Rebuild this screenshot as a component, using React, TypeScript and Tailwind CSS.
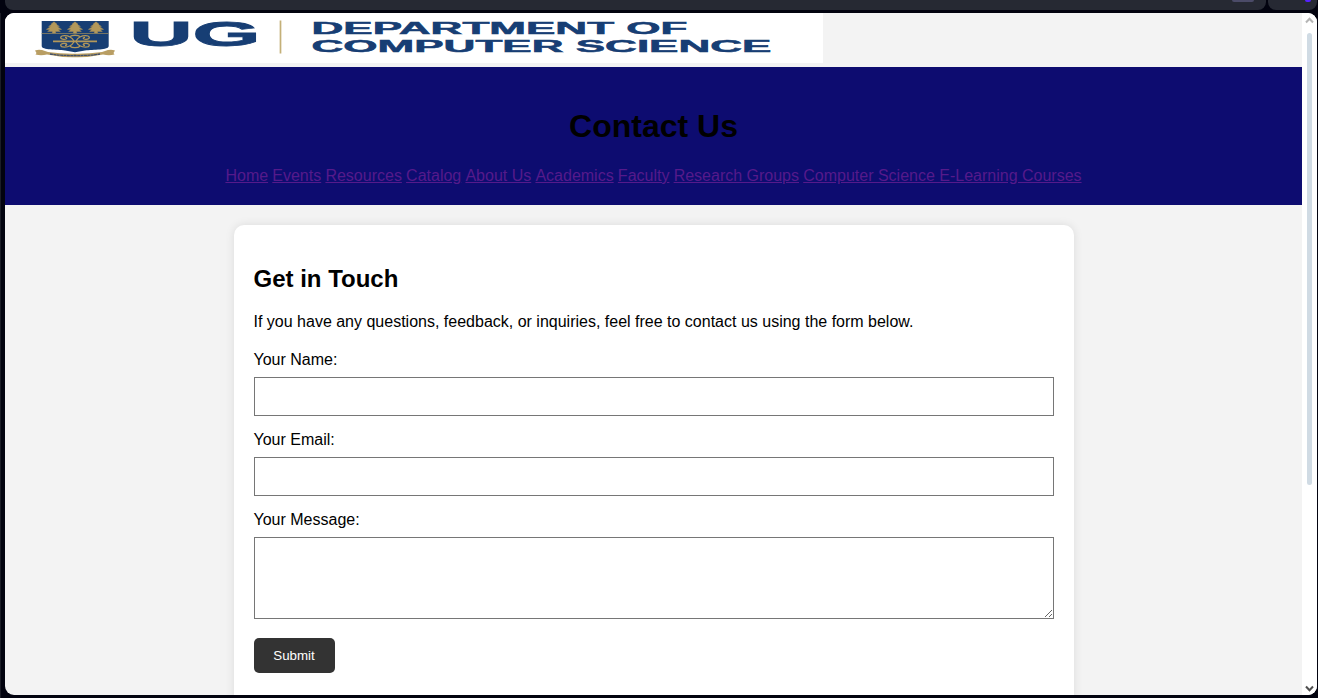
import React from "react";

const links = [
  "Home",
  "Events",
  "Resources",
  "Catalog",
  "About Us",
  "Academics",
  "Faculty",
  "Research Groups",
  "Computer Science E-Learning Courses",
];

function Tree({ x }: { x: number }) {
  return (
    <g transform={`translate(${x} 8.8)`} fill="#b3985a" stroke="#b3985a" strokeWidth=".4">
      <path d="M0 0 3 2.4H2L5.4 4.6H3.2L7.6 7.6H4L6.4 9.8H1.6V11.2H-1.6V9.8H-6.4L-4 7.6H-7.6L-3.2 4.6H-5.4L-2 2.4H-3Z" />
    </g>
  );
}

function Logo() {
  return (
    <svg className="block h-[50px] w-[818px] bg-white" viewBox="0 0 818 50">
      <path d="M36.7 8H103.7V33C103.7 37.3 88 36.5 80 37.4L70 39.3 60 37.4C52 36.5 36.7 37.3 36.7 33Z" fill="#173e74" />
      <path d="M36.7 20.5H103.7" stroke="#8d8462" strokeWidth=".8" />
      <Tree x={49} />
      <Tree x={70} />
      <Tree x={91} />
      <g fill="none" stroke="#b3985a" strokeWidth="1.3">
        <path d="M48 28.4H92" strokeWidth="1.6" />
        <path d="M69 28C67 24.5 64 22.6 59.5 22.6 54.5 22.6 54.5 26.4 59 26.4 62.5 26.4 62.5 24.4 60 24.4" />
        <path d="M71 28C73 24.5 76 22.6 80.5 22.6 85.5 22.6 85.5 26.4 81 26.4 77.5 26.4 77.5 24.4 80 24.4" />
        <path d="M69 28.8C67 32.3 64 34.2 59.5 34.2 54.5 34.2 54.5 30.4 59 30.4 62.5 30.4 62.5 32.4 60 32.4" />
        <path d="M71 28.8C73 32.3 76 34.2 80.5 34.2 85.5 34.2 85.5 30.4 81 30.4 77.5 30.4 77.5 32.4 80 32.4" />
        <path d="M65 23.6C67 21.8 73 21.8 75 23.6M65 33.2C67 35 73 35 75 33.2" />
      </g>
      <path d="M30 37.4Q35 36 40 38L43 39Q56 41 70 40.8Q84 41 97 39L100 38Q105 36 110 37.4L108.5 40 109.5 41.5Q104 43 98 41.5Q84 44.5 70 44.2Q56 44.5 42 41.5Q36 43 30.5 41.5L31.5 40Z" fill="#b99e63" />
      <path d="M45 41Q57 42.8 70 42.5Q83 42.8 95 41" fill="none" stroke="#42506a" strokeWidth="1.3" strokeDasharray="3 .4" />
      <g fill="#173e74" stroke="#173e74" fontFamily="'Liberation Sans', Arial, sans-serif" fontWeight="700">
        <text x="124.5" y="33.2" fontSize="34.5" strokeWidth=".8" textLength="131" lengthAdjust="spacingAndGlyphs">UG</text>
        <text x="306.5" y="20.8" fontSize="16.8" strokeWidth=".5" textLength="376" lengthAdjust="spacingAndGlyphs">DEPARTMENT OF</text>
        <text x="306.5" y="38.5" fontSize="16.8" strokeWidth=".5" textLength="460" lengthAdjust="spacingAndGlyphs">COMPUTER SCIENCE</text>
      </g>
      <path d="M275.5 7.5V40.5" stroke="#c4b078" strokeWidth="1.7" />
    </svg>
  );
}

function Scrollbar() {
  return (
    <div className="flex w-[15px] shrink-0 flex-col items-center bg-white pt-[4px] pb-[3px]">
      <svg width="9" height="7" viewBox="0 0 9 7" fill="none" stroke="#b5b5b5" strokeWidth="2">
        <path d="M1 5.5 4.5 1.7 8 5.5" />
      </svg>
      <div className="mt-[9px] h-[452px] w-[5px] rounded-full bg-[#d0dbe4]" />
      <svg className="mt-auto" width="9" height="7" viewBox="0 0 9 7" fill="none" stroke="#505050" strokeWidth="2">
        <path d="M1 1.5 4.5 5.3 8 1.5" />
      </svg>
    </div>
  );
}

export default function App() {
  return (
    <div className="flex h-[698px] w-[1318px] flex-col overflow-hidden bg-[#02030f] font-['Liberation_Sans',Arial,sans-serif] text-base leading-[18px] text-black">
      <div className="flex h-[10px] shrink-0 gap-[2px] pr-px pl-[5px]">
        <div className="flex flex-1 justify-end rounded-b-lg bg-[#262933] pr-[12px]">
          <div className="h-[2px] w-[22px] rounded-b-full bg-[#4b4b68]" />
        </div>
        <div className="flex w-[49px] justify-end rounded-b-lg bg-[#262933] pr-[6px]">
          <div className="h-[2px] w-[6px] rounded-b-full bg-[#5522ff]" />
        </div>
      </div>
      <div className="mt-[3px] flex h-[685px] border-l border-[#1b1d27] pr-px pb-[3px] pl-[4px]">
        <div className="flex flex-1 overflow-hidden rounded-[9px] bg-[#f3f3f3]">
          <div className="w-[1297px] overflow-hidden">
            <Logo />
            <header className="mt-[4px] h-[138px] bg-[#0d0c70] pt-[41px] text-center">
              <h1 className="text-[32px] leading-[37px] font-bold">Contact Us</h1>
              <nav className="mt-[22px] flex justify-center gap-[4.2px] whitespace-nowrap">
                {links.map((label) => (
                  <a key={label} href="#" className="text-[#551a8b] underline">
                    {label}
                  </a>
                ))}
              </nav>
            </header>
            <main className="mx-auto mt-[20px] h-[520px] w-[840px] rounded-[10px] bg-white px-[20px] pt-[40px] shadow-[0_0_10px_rgba(0,0,0,0.1)]">
              <h2 className="text-2xl leading-[28px] font-bold">Get in Touch</h2>
              <p className="mt-[20px]">
                If you have any questions, feedback, or inquiries, feel free to contact us using the form below.
              </p>
              <form className="flex flex-col pt-[20px]">
                <label htmlFor="name">Your Name:</label>
                <input id="name" className="mt-[8px] h-[39px] border border-[#767676] bg-white px-[10px]" />
                <label htmlFor="email" className="mt-[15px]">Your Email:</label>
                <input id="email" className="mt-[8px] h-[39px] border border-[#767676] bg-white px-[10px]" />
                <label htmlFor="message" className="mt-[15px]">Your Message:</label>
                <textarea id="message" className="mt-[8px] h-[82px] border border-[#767676] bg-white p-[10px]" />
                <button type="button" className="mt-[19px] h-[35px] w-[81px] rounded-[5px] bg-[#333333] text-[13.333px] leading-[15px] text-white">
                  Submit
                </button>
              </form>
            </main>
          </div>
          <Scrollbar />
        </div>
      </div>
    </div>
  );
}
